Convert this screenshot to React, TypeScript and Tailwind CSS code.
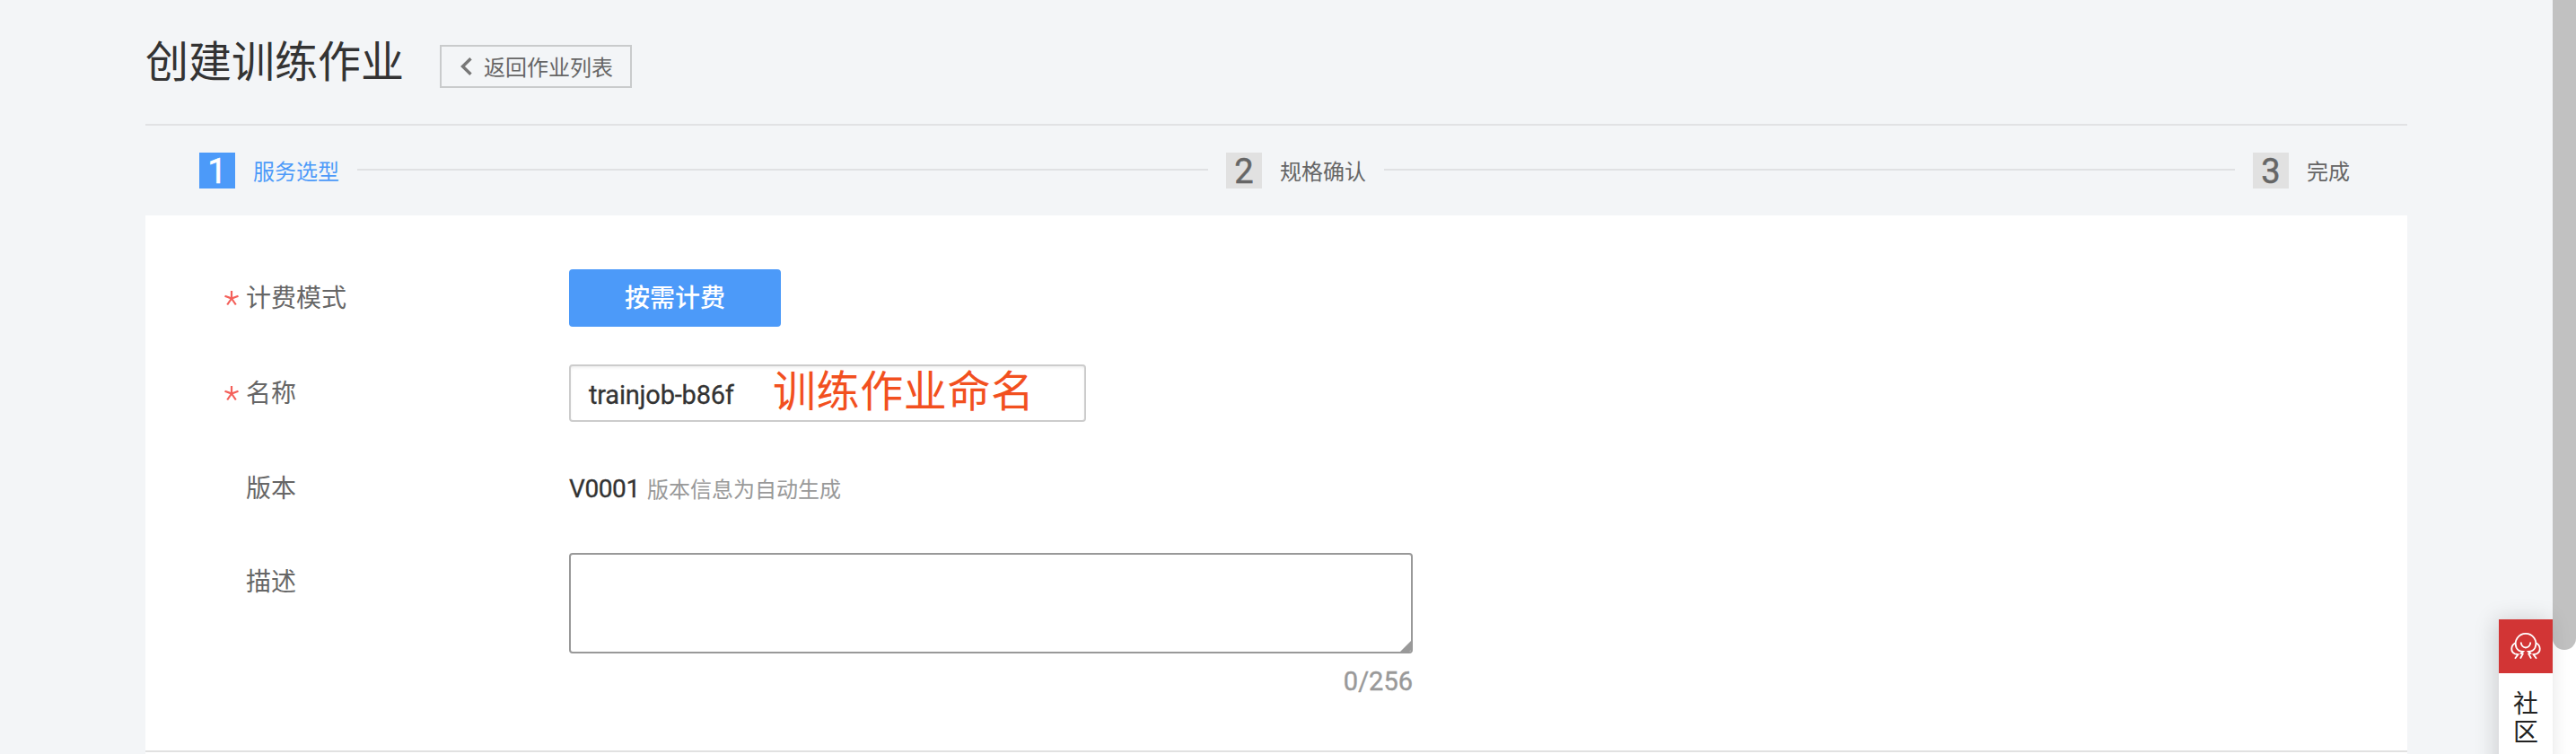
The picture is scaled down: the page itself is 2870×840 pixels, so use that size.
import React from "react";

function Step({ n, label, active }: { n: number; label: string; active?: boolean }) {
  return (
    <div className="flex shrink-0 items-center">
      <div
        className={
          active
            ? "flex h-10 w-10 items-center justify-center bg-[#4c9af9] text-[38px] leading-[40px] text-white [-webkit-text-stroke:0.5px_#fff]"
            : "flex h-10 w-10 items-center justify-center bg-[#e1e1e1] text-[38px] leading-[40px] text-[#666] [-webkit-text-stroke:0.5px_#666]"
        }
      >
        <span className="mt-[2px]">{n}</span>
      </div>
      <span className={active ? "ml-5 mt-1 text-[24px] text-[#4c9af9]" : "ml-5 mt-1 text-[24px] text-[#666]"}>{label}</span>
    </div>
  );
}

function Label({ text, required }: { text: string; required?: boolean }) {
  return (
    <div className="flex w-96 shrink-0 items-center text-[28px] text-[#666]">
      <span className="flex w-6 items-center">
        {required && (
          <svg width="16" height="17" viewBox="0 0 16 17" fill="none" stroke="#f4605a" strokeWidth="2.2">
            <path d="M8 0v8.500M0.500 5.700L8 8.500l7.500-2.800M8 8.500L3.200 15.500M8 8.500l4.800 7" />
          </svg>
        )}
      </span>
      <span className="mt-[2px]">{text}</span>
    </div>
  );
}

export default function App() {
  return (
    <div className="relative flex h-[840px] w-[2870px] overflow-hidden bg-[#f3f5f7] font-['Roboto','Noto_Sans_CJK_SC',sans-serif] text-[#333]">
      <main className="ml-[162px] flex w-[2520px] flex-col">
        <header className="flex h-[140px] items-start border-b-2 border-[#e1e2e4]">
          <h1 className="mt-[35px] text-[48px] leading-[70px]">创建训练作业</h1>
          <button className="ml-10 mt-[50px] flex h-12 w-[214px] items-center border-2 border-[#c9cbcc] pl-[21px] text-[24px] leading-none text-[#666]">
            <svg width="13" height="20" viewBox="0 0 13 20" fill="none" stroke="#777" strokeWidth="3.4">
              <path d="M11.500 1.200L2.500 10l9 8.800" />
            </svg>
            <span className="ml-[13px] mt-[3px] whitespace-nowrap">返回作业列表</span>
          </button>
        </header>

        <nav className="flex h-[100px] items-center pl-[60px] pr-16">
          <Step n={1} label="服务选型" active />
          <div className="mx-5 mb-[2px] h-[2px] flex-1 bg-[#e0e1e3]" />
          <Step n={2} label="规格确认" />
          <div className="mx-5 mb-[2px] h-[2px] flex-1 bg-[#e0e1e3]" />
          <Step n={3} label="完成" />
        </nav>

        <section className="flex h-[598px] flex-col border-b-2 border-[#e1e1e1] bg-white pl-[88px] pt-[60px]">
          <div className="flex h-16">
            <Label text="计费模式" required />
            <button className="h-16 w-[236px] rounded bg-[#4c9af9] pt-[2px] text-[28px] font-medium text-white">按需计费</button>
          </div>
          <div className="mt-[42px] flex h-16">
            <Label text="名称" required />
            <div className="flex h-16 w-[576px] items-center rounded border-2 border-[#ccc] pl-5 shadow-[inset_0_2px_3px_rgba(0,0,0,0.06)]">
              <span className="mt-[6px] w-[205px] whitespace-nowrap text-[29px] tracking-[-0.2px] [-webkit-text-stroke:0.3px_#333]">trainjob-b86f</span>
              <span className="-mt-[3px] whitespace-nowrap text-[48px] leading-[60px] tracking-[0.6px] text-[#f2501f]">训练作业命名</span>
            </div>
          </div>
          <div className="mt-[42px] flex h-16 items-center">
            <Label text="版本" />
            <span className="mt-[2px] w-[87px] whitespace-nowrap text-[28px] tracking-[-0.4px] [-webkit-text-stroke:0.3px_#333]">V0001</span>
            <span className="mt-1 text-[24px] text-[#999]">版本信息为自动生成</span>
          </div>
          <div className="mt-10 flex h-[112px]">
            <div className="flex h-16">
              <Label text="描述" />
            </div>
            <div className="flex h-[112px] w-[940px] items-end justify-end overflow-hidden rounded border-2 border-[#999]">
              <svg width="12" height="12" viewBox="0 0 12 12">
                <path d="M12 0v12H0z" fill="#999" />
              </svg>
            </div>
          </div>
          <div className="ml-96 mt-[11px] w-[940px] text-right text-[29px] leading-[40px] text-[#999] [-webkit-text-stroke:0.4px_#999]">0/256</div>
        </section>
        <div className="flex-1 bg-white" />
      </main>

      <div className="absolute bottom-0 right-0 h-[840px] w-[26px] bg-white">
        <div className="h-[724px] w-full rounded-b-full bg-[#c1c1c1]" />
      </div>
      <div className="absolute left-[2784px] top-[690px] flex h-[180px] w-[60px] flex-col items-center bg-white shadow-[-4px_0_24px_rgba(0,0,0,0.15)]">
        <div className="flex h-[60px] w-[60px] items-center justify-center bg-[#d23535]">
          <svg width="34" height="32" viewBox="0 0 34 32" fill="none" stroke="#fff" strokeWidth="1.8">
            <path d="M11 29.700L13.700 24.500L11.800 24L14 22Q8.500 21.500 6.500 17.300A11.300 11.300 0 1 1 27.500 17.300Q25.500 21.500 20 22L22.200 24L20.300 24.500L23 29.700" />
            <path d="M11.700 11.500a5.300 6 0 0 0 10.600 0" />
            <path d="M5.700 12.300C0 15 0 22 4.700 24.300L8.500 25L5 29.700" />
            <path d="M28.300 12.300C34 15 34 22 29.300 24.300L25.500 25L29 29.700" />
          </svg>
        </div>
        <div className="mt-[19px] flex flex-col items-center text-[28px] leading-[32px] text-[#222]">
          <span>社</span>
          <span>区</span>
        </div>
      </div>
    </div>
  );
}
